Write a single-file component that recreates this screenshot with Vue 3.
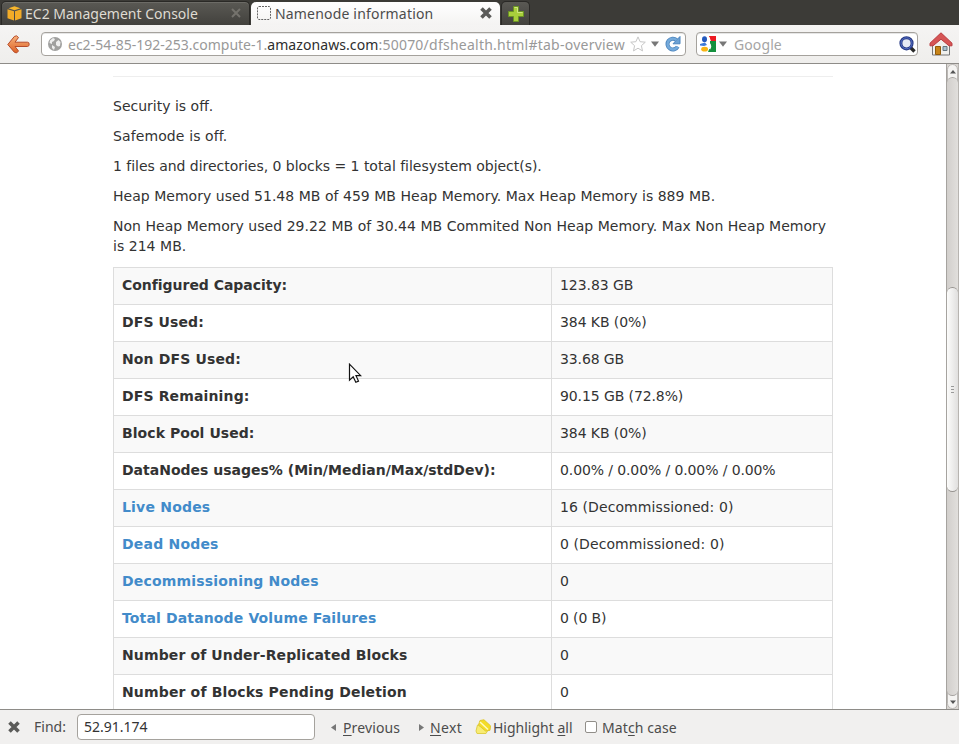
<script setup>
// `track` is the letter spacing of a line, in hundredths of a pixel
const facts = [
  { text: 'Security is off.', track: 0 },
  { text: 'Safemode is off.', track: 11 },
  { text: '1 files and directories, 0 blocks = 1 total filesystem object(s).', track: -3 },
  { text: 'Heap Memory used 51.48 MB of 459 MB Heap Memory. Max Heap Memory is 889 MB.', track: 2.7 },
  { text: 'Non Heap Memory used 29.22 MB of 30.44 MB Commited Non Heap Memory. Max Non Heap Memory is 214 MB.', track: 3.5 },
]
const rows = [
  { name: 'Configured Capacity:', track: -3, value: '123.83 GB', valueTrack: -7 },
  { name: 'DFS Used:', track: 10, value: '384 KB (0%)', valueTrack: -9 },
  { name: 'Non DFS Used:', track: 14, value: '33.68 GB', valueTrack: -11 },
  { name: 'DFS Remaining:', track: 14, value: '90.15 GB (72.8%)', valueTrack: -10 },
  { name: 'Block Pool Used:', track: 6, value: '384 KB (0%)', valueTrack: -9 },
  { name: 'DataNodes usages% (Min/Median/Max/stdDev):', track: 0, value: '0.00% / 0.00% / 0.00% / 0.00%', valueTrack: -11 },
  { name: 'Live Nodes', track: 20, value: '16 (Decommissioned: 0)', valueTrack: 9, link: true },
  { name: 'Dead Nodes', track: 20, value: '0 (Decommissioned: 0)', valueTrack: 9, link: true },
  { name: 'Decommissioning Nodes', track: 18, value: '0', valueTrack: 0, link: true },
  { name: 'Total Datanode Volume Failures', track: 14, value: '0 (0 B)', valueTrack: -14, link: true },
  { name: 'Number of Under-Replicated Blocks', track: 12, value: '0', valueTrack: 0 },
  { name: 'Number of Blocks Pending Deletion', track: 15, value: '0', valueTrack: 0 },
]
const spacing = (track) => ({ letterSpacing: `${track / 100}px` })
</script>

<template>
  <div class="browser">
    <div class="tabs">
      <div class="tab idle">
        <svg class="cube" width="15" height="15" viewBox="0 0 15 15">
          <path d="M.5 3.200 7 5.200V14.600L.5 12.200zM8 5.200l6.500-2v9L8 14.600z" fill="#f3ac27" />
          <path d="M1.500 2.200 7.500.2l6 2-6 2z" fill="#f8b62c" />
        </svg>
        <span class="label ec2">EC2 Management Console</span>
        <svg class="close" width="10" height="10" viewBox="0 0 10 10"><path d="M1 1l8 8M9 1l-8 8" stroke="#75736d" stroke-width="2" /></svg>
      </div>
      <div class="tab active">
        <svg class="blank" width="14" height="14" viewBox="0 0 14 14"><rect x=".5" y=".5" width="13" height="13" rx="1.500" fill="none" stroke="#666" stroke-dasharray="2 1" /></svg>
        <span class="label node">Namenode information</span>
        <svg class="close" width="12" height="12" viewBox="0 0 12 12"><path d="M1.500 1.500l9 9M10.500 1.500l-9 9" stroke="#5b5b59" stroke-width="3.600" /></svg>
      </div>
      <div class="tab plus">
        <svg width="16" height="16" viewBox="0 0 16 16"><path d="M5.500.5h5v5h5v5h-5v5h-5v-5h-5v-5h5z" fill="#a9cf3c" stroke="#6b9424" /><path d="M6.500 1.500h3v5h5" fill="none" stroke="#d0e681" /></svg>
      </div>
    </div>

    <div class="toolbar">
      <svg class="back" width="23" height="19" viewBox="0 0 23 19">
        <defs><linearGradient id="orange" x2="0" y2="1"><stop stop-color="#f7b27c" /><stop offset="1" stop-color="#dd6125" /></linearGradient></defs>
        <path d="M9.500.8 11.500 2.500 8 7.200H20.500Q22.200 7.200 22.200 9.300T20.500 11.500H8L11.500 16 9.500 18 7.300 17.200.8 9.500 7.300 1.500z" fill="url(#orange)" stroke="#b64b2a" />
      </svg>
      <div class="field url">
        <svg class="globe" width="14" height="14" viewBox="0 0 14 14"><circle cx="7" cy="7" r="7" fill="#a0a09f" /><path d="M2 3.500 5 1l2 1-1 2-2 1v2L1.500 6zM8 5l2.500-2 2 2-.5 4-2 .5L8 8zM4 8l3 2-1 3-2-2z" fill="#eee" /></svg>
        <span class="address"><span>ec2-54-85-192-253.compute-1.</span><span class="host">amazonaws.com</span><span class="path">:50070/dfshealth.html#tab-overview</span></span>
        <svg class="star" width="16" height="16" viewBox="0 0 16 16"><path d="M8 .9l2.100 4.800 5.200.5-3.900 3.500 1.100 5.200L8 12.200l-4.500 2.700 1.100-5.200L.7 6.200l5.200-.5z" fill="#fff" stroke="#c6c6c6" /></svg>
        <svg class="drop1" width="8" height="6" viewBox="0 0 8 6"><path d="M0 .5h8L4 5.800z" fill="#777" /></svg>
        <svg class="reload" width="16" height="16" viewBox="0 0 16 16"><path d="M12.700 10.600A5.400 5.400 0 1 1 11.500 4" fill="none" stroke="#4d86be" stroke-width="4" /><path d="M15 .5v7.300H8z" fill="#6ea2d4" stroke="#4d86be" /><path d="M12.700 10.600A5.400 5.400 0 1 1 11.500 4" fill="none" stroke="#75aadb" stroke-width="2.400" /></svg>
      </div>
      <div class="field search">
        <svg class="google" width="16" height="16" viewBox="0 0 16 16">
          <path d="M0 0h16v16H0z" fill="#fff" /><path d="M8.500 0H16v5h-5z" fill="#ed1c24" /><path d="M10 5h6v11H8l2-5z" fill="#15913e" />
          <ellipse cx="4.500" cy="3.200" rx="2.500" ry="3" fill="#2459bd" /><path d="M0 8 5 6.500 7 9 4 10 0 9.500z" fill="#3c79d8" /><ellipse cx="4.600" cy="13.200" rx="3.400" ry="2.400" fill="#f8b514" />
          <path d="M7.500 0q3.500 3 .5 6.500 4 3 1.500 6.500" fill="none" stroke="#fff" stroke-width="1.600" />
        </svg>
        <svg class="drop2" width="8" height="6" viewBox="0 0 8 6"><path d="M0 .5h8L4 5.800z" fill="#777" /></svg>
        <span class="hint">Google</span>
        <svg class="lens" width="17" height="17" viewBox="0 0 17 17"><path d="M11.500 11.500l4 4" stroke="#292929" stroke-width="3.400" /><circle cx="7.500" cy="7.300" r="5.600" fill="#e5e9f4" stroke="#263984" stroke-width="3" /><circle cx="7.500" cy="7.300" r="5.500" fill="none" stroke="#5872c8" stroke-width="1" /></svg>
      </div>
      <svg class="home" width="24" height="24" viewBox="0 0 24 24">
        <path d="M3.500 12 12 4.500l8.500 7.500v11h-17z" fill="#f0f0ed" stroke="#777" />
        <path d="M6.500 14.500h5v8h-5z" fill="#c78419" stroke="#925b0a" /><path d="M14 14.500h4v4h-4z" fill="#a9c2cf" stroke="#647680" />
        <path d="M12 .8 23 11.200v2.600h-3L12 7.200l-8 6.600H1v-2.600z" fill="#d65555" stroke="#b93c40" />
      </svg>
    </div>

    <div class="viewport">
      <main class="page">
        <hr />
        <p v-for="fact in facts" :key="fact.text" :style="spacing(fact.track)">{{ fact.text }}</p>
        <table>
          <tbody>
            <tr v-for="row in rows" :key="row.name">
              <th :style="spacing(row.track)"><a v-if="row.link">{{ row.name }}</a><template v-else>{{ row.name }}</template></th>
              <td :style="spacing(row.valueTrack)">{{ row.value }}</td>
            </tr>
          </tbody>
        </table>
      </main>
      <div class="scrollbar">
        <div class="step up"><svg width="6" height="4" viewBox="0 0 6 4"><path d="M0 3.500h6L3 0z" fill="#555" /></svg></div>
        <div class="track">
          <div class="thumb"><i></i><i></i><i></i></div>
        </div>
        <div class="step down"><svg width="6" height="4" viewBox="0 0 6 4"><path d="M0 .5h6L3 4z" fill="#555" /></svg></div>
      </div>
      <svg class="pointer" width="14" height="21" viewBox="0 0 14 21"><path d="M1.500 1.200v16l3.700-3.400 2.600 5.500 2.700-1.200-2.500-5.400h4.700z" fill="#fff" stroke="#111" stroke-width="1.200" /></svg>
    </div>

    <div class="findbar">
      <svg class="fclose" width="12" height="12" viewBox="0 0 12 12"><path d="M1.500 1.500l9 9M10.500 1.500l-9 9" stroke="#5b5b59" stroke-width="3.600" /></svg>
      <span class="find">Find:</span>
      <div class="query"><span>52.91.174</span></div>
      <svg class="prev-arrow" width="5" height="7" viewBox="0 0 5 7"><path d="M5 0v7L0 3.500z" fill="#777" /></svg>
      <span class="prev"><u>P</u>revious</span>
      <svg class="next-arrow" width="5" height="7" viewBox="0 0 5 7"><path d="M0 0v7l5-3.500z" fill="#777" /></svg>
      <span class="next"><u>N</u>ext</span>
      <svg class="marker" width="17" height="16" viewBox="0 0 17 16">
        <path d="M2.500 6 1 12l1 2.500h9l2-3.500z" fill="#f8ec74" stroke="#e0cf48" /><path d="M5 1.500 9 .8l6.500 6-.5 4.500-4.500.7L3.500 6z" fill="#f4dc26" stroke="#dfc832" /><path d="M5 3l8 7.500" stroke="#fffbc0" stroke-width="1.500" />
      </svg>
      <span class="highlight">Highlight <u>a</u>ll</span>
      <span class="check"></span>
      <span class="match">Mat<u>c</u>h case</span>
    </div>
  </div>
</template>

<style>
body { margin: 0; overflow: hidden; }
</style>

<style scoped>
.browser { width: 959px; height: 744px; display: flex; flex-direction: column; overflow: hidden; background: #fff; font: 14px/20px "Noto Sans", sans-serif; color: #4c4c4c; }
.browser * { box-sizing: border-box; }
svg, span { flex: none; white-space: nowrap; }
svg { display: block; }
.tabs { height: 25px; flex: none; display: flex; align-items: flex-end; background: #3c3b37; }
.tab { display: flex; align-items: center; height: 24px; border-radius: 5px 5px 0 0; padding-top: 1px; }
.idle { width: 249px; margin-left: 1px; padding-left: 5px; background: linear-gradient(#5a5954, #42413d); border: 1px solid #2a2926; border-bottom: 0; box-shadow: inset 0 1px #6c6b66; color: #dfdbd2; }
.idle .label { width: 206px; margin-left: 3px; }
.idle .cube, .idle .close { position: relative; top: -1px; }
.active { width: 249px; margin-left: 1px; padding-left: 6px; height: 23px; background: linear-gradient(#fff, #f4f3f2); }
.active .label { width: 205px; margin-left: 4px; letter-spacing: .18px; }
.active svg { position: relative; top: -1px; }
.plus { width: 29px; margin-left: 1px; padding-top: 0; justify-content: center; background: linear-gradient(#5a5954, #42413d); border: 1px solid #2a2926; border-bottom: 0; }
.toolbar { height: 39px; flex: none; display: flex; align-items: center; padding-left: 7px; background: linear-gradient(#f5f4f3, #efeeec); border-bottom: 1px solid #8e8c88; }
.field { height: 24px; display: flex; align-items: center; background: #fff; border: 1px solid #a5a29d; border-radius: 4px; box-shadow: inset 0 1px #e6e6e6; }
.url { width: 645px; margin-left: 11px; padding-left: 6px; color: #999; }
.address { width: 558px; margin-left: 6px; padding-top: 1px; }
.host { color: #2e2e2e; letter-spacing: .08px; }
.path { letter-spacing: .24px; }
.star { margin-left: 4px; }
.drop1 { margin-left: 5px; }
.reload { margin-left: 6px; }
.search { width: 222px; margin-left: 10px; padding-left: 3px; }
.drop2 { margin-left: 3px; }
.hint { width: 159px; margin-left: 7px; padding-top: 1px; letter-spacing: .1px; color: #a5a5a5; }
.lens { margin-left: 6px; }
.home { margin-left: 11px; }
.viewport { position: relative; flex: 1; min-height: 0; display: flex; overflow: hidden; font-family: "DejaVu Sans", sans-serif; color: #333; }
.page { width: 720px; margin-left: 113px; flex: none; }
hr { margin: 12px 0 19px; border: 0; border-top: 1px solid #eee; }
p { margin: 0 0 10px; }
table { width: 720px; margin-top: 11px; border-collapse: collapse; table-layout: fixed; }
th, td { height: 37px; padding: 7px 8px 9px; border: 1px solid #ddd; text-align: left; line-height: 20px; }
th { width: 438px; }
tr:nth-child(odd) { background: #f9f9f9; }
a { color: #428bca; }
.scrollbar { width: 13px; margin-left: 113px; display: flex; flex-direction: column; background: #d9d6d2; border-left: 1px solid #a6a39f; border-right: 1px solid #b7b4b0; }
.step { height: 18px; flex: none; display: flex; align-items: center; justify-content: center; background: #f5f4f2; border: 1px solid #bbb8b5; }
.up { height: 19px; margin-bottom: -6px; padding-bottom: 4px; border-radius: 6px 6px 0 0; }
.down { height: 19px; margin-top: -6px; padding-top: 4px; border-radius: 0 0 6px 6px; }
.track { position: relative; z-index: 1; flex: 1; padding-top: 209px; background: linear-gradient(90deg, #d2cfcc, #e1dfdc); border: 1px solid #a6a39f; border-width: 1px 0; border-radius: 6px; }
.thumb { width: 11px; height: 205px; display: flex; flex-direction: column; align-items: center; justify-content: center; gap: 2px; border: 1px solid #96938f; border-width: 1px 0; border-radius: 6px; background: linear-gradient(90deg, #fcfcfb, #e0dfde); }
.thumb i { width: 3px; height: 1px; background: #999; }
.pointer { position: absolute; left: 348px; top: 299px; }
.findbar { height: 35px; flex: none; display: flex; align-items: center; padding-left: 8px; background: #f1f0ef; border-top: 1px solid #8e8c88; }
.find { width: 33px; margin-left: 14px; }
.query { width: 238px; height: 26px; margin-left: 10px; padding: 2px 6px; background: #fff; border: 1px solid #a5a29d; border-radius: 4px; color: #333; }
.prev-arrow { margin-left: 16px; }
.prev { width: 58px; margin-left: 7px; padding-top: 1px; letter-spacing: .12px; }
.next-arrow { margin-left: 18px; }
.next { width: 33px; margin-left: 6px; padding-top: 1px; letter-spacing: .4px; }
.marker { margin-left: 12px; }
.highlight { width: 79px; margin-left: 1px; padding-top: 1px; }
.check { width: 12px; height: 12px; margin-left: 13px; background: #fff; border: 1px solid #918e89; border-radius: 2px; }
.match { margin-left: 5px; padding-top: 1px; letter-spacing: .1px; }
u { text-underline-offset: 2px; }
</style>
